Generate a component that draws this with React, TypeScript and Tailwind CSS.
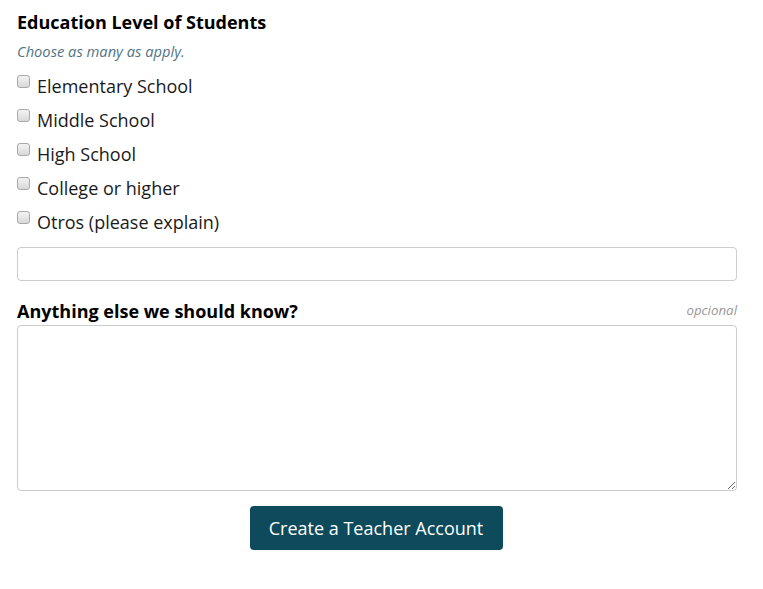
const options = [
  'Elementary School',
  'Middle School',
  'High School',
  'College or higher',
  'Otros (please explain)',
];

export default function App() {
  return (
    <div className="min-h-[589px] bg-white px-[17px] pt-[10px] font-['Open_Sans',sans-serif] text-[#111]">
      <h2 className="text-[18px] font-bold leading-[24px] text-black">Education Level of Students</h2>
      <p className="mt-[7px] text-[14.7px] italic leading-[20px] text-[#4f7585]">Choose as many as apply.</p>

      <div className="mt-[8px] flex flex-col">
        {options.map((o) => (
          <label key={o} className="flex h-[34px] items-center gap-[7px]">
            <input
              type="checkbox"
              className="m-0 -mt-[9px] h-[13px] w-[13px] shrink-0 appearance-none rounded-[3px] border border-[#a9a9a9] bg-gradient-to-b from-[#f3f3f3] to-[#d9d9d9]"
            />
            <span className="text-[18px] leading-[24px] text-[#1a1a1a]">{o}</span>
          </label>
        ))}
      </div>

      <input
        type="text"
        className="mt-[8px] block h-[34px] w-[720px] rounded-[4px] border border-[#ccc] bg-white px-3 text-[16px] outline-none"
      />

      <div className="mt-[18px] flex w-[720px] items-end justify-between">
        <h3 className="text-[18px] font-bold leading-[24px] text-black">Anything else we should know?</h3>
        <span className="pb-[5px] text-[13.3px] italic leading-[16px] text-[#999]">opcional</span>
      </div>

      <textarea className="mt-[2px] block h-[166px] w-[720px] rounded-[4px] border border-[#ccc] bg-white px-3 py-2 text-[16px] outline-none" />

      <div className="mt-[15px] flex w-[718px] justify-center">
        <button className="h-[44px] w-[253px] rounded-[4px] bg-[#0d4b5c] text-[18px] leading-[24px] text-white">
          Create a Teacher Account
        </button>
      </div>
    </div>
  );
}
